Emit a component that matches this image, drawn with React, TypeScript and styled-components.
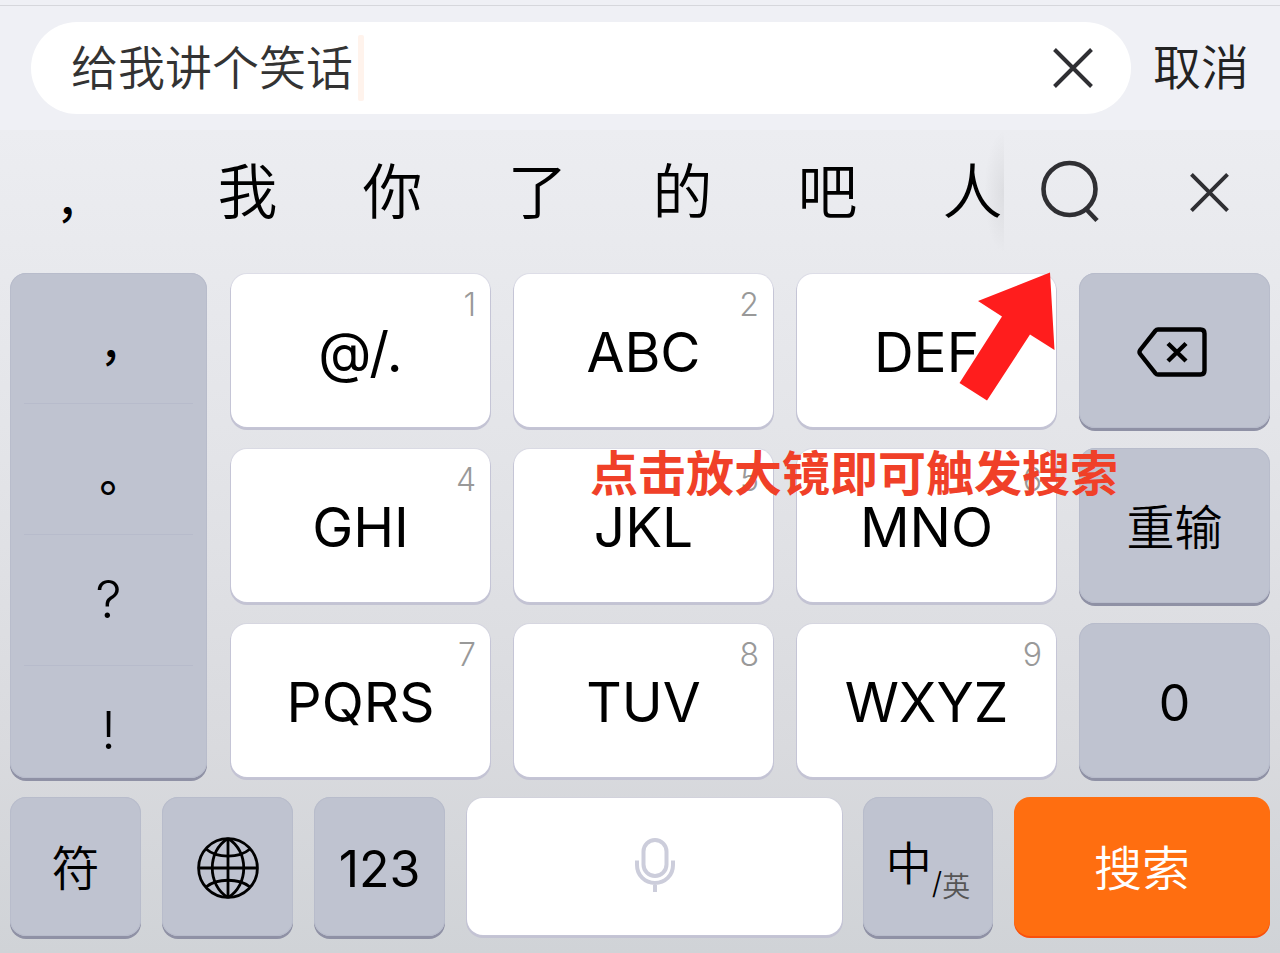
import React, { useState } from "react";
import styled, { createGlobalStyle, css } from "styled-components";

const GlobalStyle = createGlobalStyle`
  *, *::before, *::after { box-sizing: border-box; }
  body {
    margin: 0;
    background: #eff0f5;
    font-family: Inter, "Noto Sans CJK SC", sans-serif;
    font-weight: 350;
    color: #000;
  }
  button, input { font: inherit; color: inherit; }
  button { border: 0; padding: 0; background: none; cursor: pointer; }
  svg { display: block; }
`;

const Page = styled.main`
  min-height: 100vh;
  display: flex;
  flex-direction: column;
`;

const TopEdge = styled.div`
  height: 6px;
  border-bottom: 1px solid #d6d7dc;
`;

const SearchBar = styled.form`
  display: flex;
  align-items: center;
  gap: 22px;
  padding: 16px 31px;
`;

const SearchField = styled.div`
  flex: 1;
  min-width: 0;
  height: 92px;
  display: flex;
  align-items: center;
  padding: 0 38px 0 40px;
  border-radius: 46px;
  background: #fff;
`;

const SearchInput = styled.input`
  field-sizing: content;
  border: 0;
  padding: 0;
  outline: 0;
  background: none;
  font-size: 47px;
  line-height: 64px;
  color: #333;
  caret-color: transparent;
`;

const Caret = styled.span`
  width: 6px;
  height: 66px;
  margin-left: 5px;
  border-radius: 2px;
  background: #fff3ec;
`;

const ClearButton = styled.button`
  margin-left: auto;
`;

const CancelButton = styled.button`
  font-size: 48px;
  line-height: 64px;
  color: #222;
`;

const Keyboard = styled.section`
  flex: 1;
  background: linear-gradient(#ecedf1, #e3e4e8 40%, #d9dade 75%, #d0d3d7);
`;

const CandidateBar = styled.div`
  display: flex;
  height: 124px;
`;

const CandidateList = styled.div`
  position: relative;
  flex: 1;
  min-width: 0;
  display: flex;
  overflow: hidden;

  &::after {
    content: "";
    position: absolute;
    inset: 0 0 0 auto;
    width: 20px;
    background: radial-gradient(ellipse at right, rgba(0, 0, 0, 0.06), rgba(0, 0, 0, 0) 70%);
  }
`;

const Candidate = styled.button<{ $mark?: boolean }>`
  flex: 0 0 ${(p) => (p.$mark ? 175 : 145)}px;
  font-size: 60px;
  line-height: 80px;
  ${(p) =>
    p.$mark &&
    css`
      padding: 20px 0 0 56px;
      text-align: left;
      font-size: 44px;
      font-weight: 500;
    `}
`;

const CandidateTools = styled.div`
  display: flex;
  align-items: center;
  gap: 89px;
  padding: 0 51px 0 35px;
`;

const Keypad = styled.div`
  position: relative;
  display: grid;
  grid-template-columns: 197fr 260fr 260fr 260fr 191fr;
  grid-template-rows: repeat(3, 155px);
  gap: 20px 23px;
  padding: 19px 10px 0;
`;

const BottomRow = styled.div`
  display: grid;
  grid-template-columns: 131fr 131fr 131fr 376fr 130fr 256fr;
  grid-template-rows: 139px;
  gap: 21px;
  padding: 19px 10px 17px;
`;

const darkSurface = css`
  border-radius: 16px;
  background: #bfc3d0;
  box-shadow: inset 0 0 0 1px #b8bccb, 0 3px 0 #8f91a5;
`;

const Key = styled.button<{ $tone?: "light" | "dark" | "accent" }>`
  position: relative;
  display: flex;
  align-items: center;
  justify-content: center;
  min-width: 0;
  ${(p) =>
    p.$tone === "dark"
      ? css`
          ${darkSurface}
          padding-top: 2px;
        `
      : p.$tone === "accent"
        ? css`
            padding-top: 2px;
            border-radius: 16px;
            background: #ff6e10;
            color: #fff;
            box-shadow: 0 2px 0 #f9500c;
          `
        : css`
            margin: 1px 0 1px 1px;
            border-radius: 16px;
            background: #fff;
            box-shadow: 0 0 0 1px rgba(200, 200, 220, 0.35), 0 2px 0 1px #c3c3d3;
          `}
`;

const KeyHint = styled.span`
  position: absolute;
  top: 11px;
  right: 14px;
  font-weight: 300;
  font-size: 32px;
  line-height: 40px;
  color: #999;
`;

const labelSizes = { letters: 55, digits: 50, han: 48 };

const KeyLabel = styled.span<{ $kind: keyof typeof labelSizes }>`
  padding-top: 2px;
  font-size: ${(p) => labelSizes[p.$kind]}px;
  font-weight: ${(p) => (p.$kind === "han" ? 350 : 400)};
  line-height: 56px;
`;

const PunctuationPanel = styled.div`
  grid-row: 1 / 4;
  min-height: 0;
  overflow: hidden;
  display: flex;
  flex-direction: column;
  padding: 0 14px;
  ${darkSurface}
`;

const PunctuationKey = styled.button<{ $full?: boolean }>`
  flex: 0 0 131px;
  border-bottom: 1px solid #b7bbcb;
  font-size: 52px;
  line-height: 64px;
  ${(p) =>
    p.$full &&
    css`
      padding: 14px 0 0 4px;
      font-size: 44px;
      font-weight: 500;
      font-feature-settings: "halt";
    `}
`;

const LanguageLabel = styled.span`
  display: flex;
  align-items: flex-start;
  font-size: 46px;
  line-height: 64px;
`;

const LanguageAlt = styled.span`
  margin-top: 38px;
  font-size: 28px;
  line-height: 36px;
  color: #555;
`;

const Slash = styled.span`
  margin-top: 32px;
  font-size: 30px;
  line-height: 40px;
`;

const Pointer = styled.svg`
  position: absolute;
  top: 18px;
  right: 224px;
  pointer-events: none;
`;

const Tip = styled.p`
  position: absolute;
  top: 196px;
  right: 162px;
  margin: 0;
  font-size: 48px;
  line-height: 48px;
  font-weight: 700;
  white-space: nowrap;
  color: #f04028;
  pointer-events: none;
`;

const Cross = ({ size }: { size: number }) => (
  <svg width={size} height={size} viewBox="0 0 40 40" fill="none" stroke="#2f2f33" strokeWidth="4" aria-hidden="true">
    <path d="M1.5 1.5 38.5 38.5M38.5 1.5 1.5 38.5" />
  </svg>
);

const MagnifierIcon = () => (
  <svg width="62" height="64" viewBox="0 0 62 64" fill="none" stroke="#2f2f33" strokeWidth="4.6" aria-hidden="true">
    <circle cx="30.5" cy="29" r="26" />
    <path d="M47 49 58 60.5" />
  </svg>
);

const BackspaceIcon = () => (
  <svg width="76" height="50" viewBox="0 0 76 50" fill="none" stroke="#000" strokeWidth="4.4" aria-hidden="true">
    <path d="M21 2.5H63.5Q67.5 2.5 67.5 6.5V43.5Q67.5 47.5 63.5 47.5H21Q19.5 47.5 18.5 46.3L3.2 27Q1.8 25 3.2 23L18.5 3.7Q19.500 2.5 21 2.5Z" />
    <path d="M31 16.5 49 34M49 16.5 31 34" />
  </svg>
);

const GlobeIcon = () => (
  <svg width="62" height="62" viewBox="0 0 62 62" fill="none" stroke="#000" strokeWidth="2.8" aria-hidden="true">
    <circle cx="31" cy="31" r="29.4" />
    <path d="M31 1.5V60.5M1.5 31H60.5" />
    <path d="M31 1.5C10 14 10 48 31 60.5M31 1.5C52 14 52 48 31 60.5" />
    <path d="M9 12C20 21.5 42 21.5 53 12M9 50C20 41 42 41 53 50" />
  </svg>
);

const MicIcon = () => (
  <svg width="40" height="60" viewBox="0 0 40 60" fill="none" stroke="#cccddb" strokeWidth="4" aria-hidden="true">
    <rect x="8.5" y="3" width="23" height="36" rx="11.5" />
    <path d="M2 23.5V28C2 38.5 10 46 20 46S38 38.5 38 28V23.5M20 46V55" />
  </svg>
);

const candidates = ["，", "我", "你", "了", "的", "吧", "人"];
const punctuation = ["，", "。", "?", "!"];

const LetterKey = ({ letters, hint }: { letters: string; hint: string }) => (
  <Key type="button">
    <KeyLabel $kind="letters">{letters}</KeyLabel>
    <KeyHint>{hint}</KeyHint>
  </Key>
);

export default function App() {
  const [query, setQuery] = useState("给我讲个笑话");

  return (
    <Page>
      <GlobalStyle />
      <TopEdge />
      <SearchBar onSubmit={(e) => e.preventDefault()}>
        <SearchField>
          <SearchInput aria-label="搜索" value={query} onChange={(e) => setQuery(e.target.value)} />
          <Caret />
          <ClearButton type="button" aria-label="清除" onClick={() => setQuery("")}>
            <Cross size={40} />
          </ClearButton>
        </SearchField>
        <CancelButton type="button">取消</CancelButton>
      </SearchBar>

      <Keyboard>
        <CandidateBar>
          <CandidateList>
            {candidates.map((word, i) => (
              <Candidate key={word} type="button" $mark={i === 0}>
                {word}
              </Candidate>
            ))}
          </CandidateList>
          <CandidateTools>
            <button type="button" aria-label="搜索">
              <MagnifierIcon />
            </button>
            <button type="button" aria-label="收起">
              <Cross size={39} />
            </button>
          </CandidateTools>
        </CandidateBar>

        <Keypad>
          <PunctuationPanel>
            {punctuation.map((mark, i) => (
              <PunctuationKey key={mark} type="button" $full={i < 2}>
                {mark}
              </PunctuationKey>
            ))}
          </PunctuationPanel>
          <LetterKey letters="@/." hint="1" />
          <LetterKey letters="ABC" hint="2" />
          <LetterKey letters="DEF" hint="3" />
          <Key type="button" $tone="dark" aria-label="删除">
            <BackspaceIcon />
          </Key>
          <LetterKey letters="GHI" hint="4" />
          <LetterKey letters="JKL" hint="5" />
          <LetterKey letters="MNO" hint="6" />
          <Key type="button" $tone="dark">
            <KeyLabel $kind="han">重输</KeyLabel>
          </Key>
          <LetterKey letters="PQRS" hint="7" />
          <LetterKey letters="TUV" hint="8" />
          <LetterKey letters="WXYZ" hint="9" />
          <Key type="button" $tone="dark">
            <KeyLabel $kind="digits">0</KeyLabel>
          </Key>
          <Pointer width="98" height="130" viewBox="0 0 98 130" aria-hidden="true">
            <path d="M92 0.5 96.5 78 72 62.5 29 128.5 1.5 111 44 44.5 20 29Z" fill="#ff1d1d" />
          </Pointer>
          <Tip>点击放大镜即可触发搜索</Tip>
        </Keypad>

        <BottomRow>
          <Key type="button" $tone="dark">
            <KeyLabel $kind="han">符</KeyLabel>
          </Key>
          <Key type="button" $tone="dark" aria-label="切换键盘">
            <GlobeIcon />
          </Key>
          <Key type="button" $tone="dark">
            <KeyLabel $kind="digits">123</KeyLabel>
          </Key>
          <Key type="button" aria-label="语音输入">
            <MicIcon />
          </Key>
          <Key type="button" $tone="dark">
            <LanguageLabel>
              中<Slash>/</Slash>
              <LanguageAlt>英</LanguageAlt>
            </LanguageLabel>
          </Key>
          <Key type="button" $tone="accent">
            <KeyLabel $kind="han">搜索</KeyLabel>
          </Key>
        </BottomRow>
      </Keyboard>
    </Page>
  );
}
